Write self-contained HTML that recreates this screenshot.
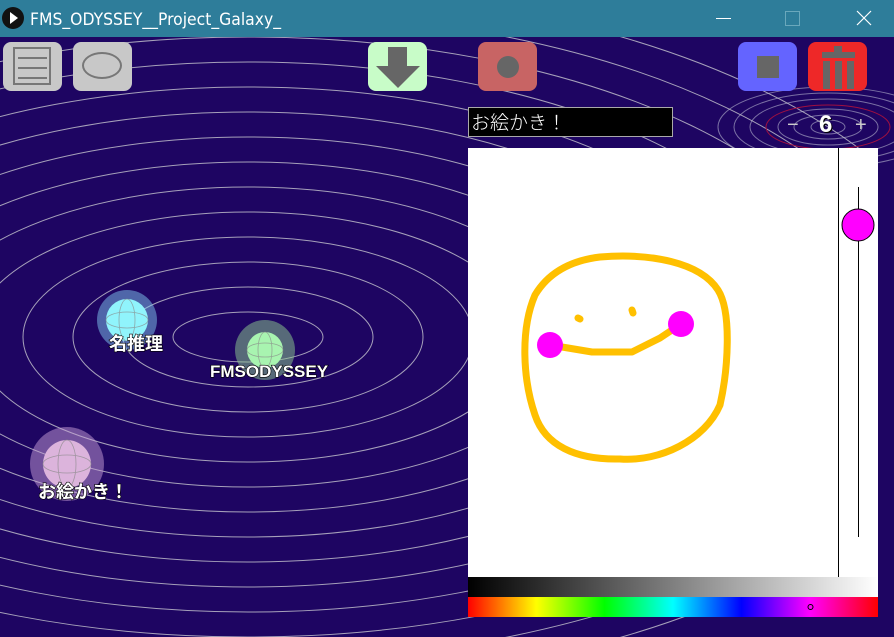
<!DOCTYPE html>
<html style="overflow:hidden"><head><meta charset="utf-8"><style>
html,body{overflow:hidden}
body{margin:0;width:894px;height:637px;background:#1e0562;font-family:"Liberation Sans","Noto Sans CJK JP",sans-serif;position:relative}
.btn{position:absolute;top:42px;width:59px;height:49px;border-radius:8px}
svg{position:absolute;left:0;top:0}
</style></head><body>
<svg width="894" height="637">
<defs>
<clipPath id="cl"><rect x="0" y="37" width="878" height="600"/></clipPath>
<linearGradient id="g1"><stop offset="0" stop-color="#000"/><stop offset="1" stop-color="#fff"/></linearGradient>
<linearGradient id="g2"><stop offset="0" stop-color="#f00"/><stop offset=".167" stop-color="#ff0"/><stop offset=".333" stop-color="#0f0"/><stop offset=".5" stop-color="#0ff"/><stop offset=".667" stop-color="#00f"/><stop offset=".833" stop-color="#f0f"/><stop offset="1" stop-color="#f00"/></linearGradient>
</defs>
<g fill="none" stroke="#c8c8d0" stroke-width="1" opacity="0.8" clip-path="url(#cl)">
<ellipse cx="248" cy="337" rx="75" ry="25"/>
<ellipse cx="248" cy="337" rx="125" ry="50"/>
<ellipse cx="248" cy="337" rx="175" ry="75"/>
<ellipse cx="248" cy="337" rx="225" ry="100"/>
<ellipse cx="248" cy="337" rx="275" ry="125"/>
<ellipse cx="248" cy="337" rx="325" ry="150"/>
<ellipse cx="248" cy="337" rx="375" ry="175"/>
<ellipse cx="248" cy="337" rx="425" ry="200"/>
<ellipse cx="248" cy="337" rx="475" ry="225"/>
<ellipse cx="248" cy="337" rx="525" ry="250"/>
<ellipse cx="248" cy="337" rx="575" ry="275"/>
<ellipse cx="248" cy="337" rx="625" ry="300"/>
<ellipse cx="248" cy="337" rx="675" ry="325"/>
<ellipse cx="248" cy="337" rx="725" ry="350"/>
</g>
<g fill="none" stroke="#b8b8d0" stroke-width="1" opacity="0.6">
<ellipse cx="828" cy="127" rx="17" ry="7"/>
<ellipse cx="828" cy="127" rx="34" ry="12"/>
<ellipse cx="828" cy="127" rx="50" ry="18"/>
<ellipse cx="828" cy="127" rx="78" ry="28"/>
<ellipse cx="828" cy="127" rx="94" ry="34"/>
<ellipse cx="828" cy="127" rx="110" ry="40"/>
</g>
<ellipse cx="828" cy="127" rx="62" ry="22" fill="none" stroke="#a01040"/>
<circle cx="127" cy="320" r="30" fill="#7fc8f0" opacity="0.5"/>
<circle cx="127" cy="320" r="21" fill="#90f4fc"/>
<circle cx="265" cy="350" r="30" fill="#90d090" opacity="0.5"/>
<circle cx="265" cy="350" r="18" fill="#a8f4b0"/>
<circle cx="67" cy="464" r="37" fill="#c8a0d8" opacity="0.5"/>
<circle cx="67" cy="464" r="24" fill="#dcb4dc"/>
<g fill="none" stroke="#888" stroke-width="0.8" opacity="0.7">
<ellipse cx="127" cy="320" rx="21" ry="8"/><ellipse cx="127" cy="320" rx="8" ry="21"/>
<ellipse cx="265" cy="350" rx="18" ry="7"/><ellipse cx="265" cy="350" rx="7" ry="18"/>
<ellipse cx="67" cy="464" rx="24" ry="9"/><ellipse cx="67" cy="464" rx="9" ry="24"/>
</g>
<g font-size="18" fill="#fff" style="paint-order:stroke" stroke="#000" stroke-width="1.2" font-weight="bold">
<text x="109" y="350">名推理</text>
<text x="210" y="377" font-size="17">FMSODYSSEY</text>
<text x="38" y="498">お絵かき！</text>
</g>
<rect x="468" y="148" width="410" height="429" fill="#fff"/>
<line x1="838.5" y1="148" x2="838.5" y2="577" stroke="#000"/>
<line x1="858.5" y1="187" x2="858.5" y2="537" stroke="#000"/>
<circle cx="858" cy="225" r="16" fill="#f0f" stroke="#000"/>
<rect x="468" y="577" width="410" height="20" fill="url(#g1)"/>
<rect x="468" y="597" width="410" height="20" fill="url(#g2)"/>
<circle cx="810.5" cy="607" r="2.5" fill="none" stroke="#000"/>
<g fill="none" stroke="#ffc000" stroke-width="7" stroke-linecap="round" stroke-linejoin="round">
<path d="M600,257 C650,253 700,262 718,290 C732,312 728,370 720,405 C705,440 660,462 620,459 C575,460 545,445 535,415 C523,380 520,330 535,295 C550,270 575,260 600,257 Z"/>
<path d="M550,345 L592,352 L632,352 L660,338 L681,324"/>
<path d="M578,318 l2,1 M632,310 l1,3"/>
</g>
<circle cx="550" cy="345" r="13" fill="#f0f"/>
<circle cx="681" cy="324" r="13" fill="#f0f"/>
<rect x="0" y="0" width="894" height="37" fill="#2e7d9a"/>
<circle cx="13" cy="18" r="11" fill="#111"/>
<path d="M10,12 L18,18 L10,24 Z" fill="#fff"/>
<line x1="716" y1="18.5" x2="731" y2="18.5" stroke="#fff"/>
<rect x="785.5" y="11.5" width="14" height="14" fill="none" stroke="#6aa8bc"/>
<path d="M857,11 L871,25 M871,11 L857,25" stroke="#fff" stroke-width="1.2"/>
<text x="30" y="25" font-size="17" fill="#fff" font-family="DejaVu Sans, sans-serif" textLength="251" lengthAdjust="spacingAndGlyphs">FMS_ODYSSEY__Project_Galaxy_</text>
</svg>
<div class="btn" style="left:3px;background:#c8c8c8"><div style="position:absolute;left:10px;top:5px;width:38px;height:38px;border:2px solid #777;box-sizing:border-box"></div><div style="position:absolute;left:15px;top:15px;width:29px;height:2px;background:#777;box-shadow:0 10px #777,0 20px #777"></div></div>
<div class="btn" style="left:73px;background:#c8c8c8"><div style="position:absolute;left:9px;top:10px;width:40px;height:27px;border:2px solid #777;border-radius:50%;box-sizing:border-box"></div></div>
<div class="btn" style="left:368px;background:#c8fcc8"><div style="position:absolute;left:20px;top:5px;width:19px;height:20px;background:#666"></div><div style="position:absolute;left:8px;top:24px;border-top:22px solid #666;border-left:22px solid transparent;border-right:22px solid transparent"></div></div>
<div class="btn" style="left:478px;background:#c86464"><div style="position:absolute;left:19px;top:14px;width:22px;height:22px;border-radius:50%;background:#666"></div></div>
<div class="btn" style="left:738px;background:#6464ff"><div style="position:absolute;left:19px;top:14px;width:22px;height:22px;background:#666"></div></div>
<div class="btn" style="left:808px;background:#ee2828"><div style="position:absolute;left:26px;top:4px;width:8px;height:6px;background:#666"></div><div style="position:absolute;left:14px;top:10px;width:33px;height:6px;background:#666"></div><div style="position:absolute;left:15px;top:19px;width:7px;height:28px;background:#666;box-shadow:12px 0 #666,24px 0 #666"></div></div>
<div style="position:absolute;left:468px;top:107px;width:205px;height:30px;background:#000;border:1px solid #aaa;box-sizing:border-box;color:#fff;font-size:19px;line-height:27px;padding-left:2px;font-family:'Noto Sans CJK JP',sans-serif;font-weight:300;overflow:hidden">お絵かき！</div>
<div style="position:absolute;left:787px;top:113px;color:#ccc;font-size:20px;line-height:24px">−</div>
<div style="position:absolute;left:819px;top:111px;color:#fff;font-size:24px;line-height:28px;font-weight:bold;text-shadow:1px 1px #000">6</div>
<div style="position:absolute;left:855px;top:113px;color:#ccc;font-size:20px;line-height:24px">+</div>
</body></html>
